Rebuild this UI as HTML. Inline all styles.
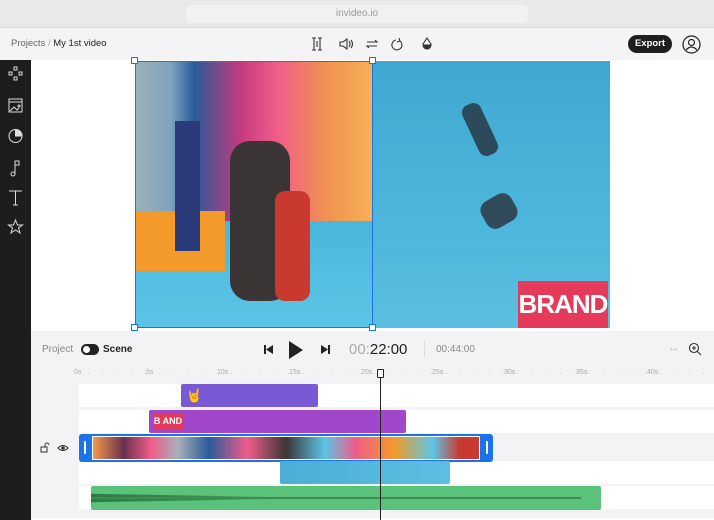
<!DOCTYPE html>
<html><head><style>
*{margin:0;padding:0;box-sizing:border-box}
body{width:714px;height:520px;overflow:hidden;background:#fff;font-family:"Liberation Sans",sans-serif;position:relative}
.abs{position:absolute}
</style></head><body>
<div class="abs" style="left:0;top:0;width:714px;height:28px;background:#e9e8ea;border-bottom:1px solid #dcdcdc"></div>
<div class="abs" style="left:186px;top:5px;width:342px;height:18px;background:#f1f0f2;border-radius:5px;text-align:center;font-size:10px;line-height:18px;color:#999">invideo.io</div>
<div class="abs" style="left:0;top:28px;width:714px;height:32px;background:#f4f3f5"></div>
<div class="abs" style="left:11px;top:38px;font-size:9.5px;color:#666">Projects <span style="color:#aaa">/</span> <span style="color:#222">My 1st video</span></div>
<svg class="abs" style="left:310px;top:36px" width="130" height="16" fill="none" stroke="#333" stroke-width="1.1">
<path d="M4 2v12M10 2v12M2 2h4M2 14h4M8 2h4M8 14h4M7 5v6" />
<path d="M30 6h3l4-3v10l-4-3h-3zM39 5q2 3 0 6M41 4q3 4 0 8"/>
<path d="M57 6h10l-2-2M67 10H57l2 2"/>
<path d="M86 4a5 5 0 1 0 4 1M89 2l1 3-3 1"/>
<path d="M117 2l-4 6a4 4 0 0 0 8 0z"/><path d="M113 9h8a4 4 0 0 1-8 0z" fill="#333"/>
</svg>
<div class="abs" style="left:628px;top:35px;width:44px;height:18px;background:#1f1d20;border-radius:9px;color:#fff;font-size:9.5px;font-weight:bold;text-align:center;line-height:18px">Export</div>
<svg class="abs" style="left:682px;top:35px" width="19" height="19" fill="none" stroke="#222" stroke-width="1.2"><circle cx="9.5" cy="9.5" r="8.5"/><circle cx="9.5" cy="7.5" r="3"/><path d="M4 15q5.5-6 11 0"/></svg>

<div class="abs" style="left:0;top:60px;width:31px;height:460px;background:#1e1c1f"></div>
<svg class="abs" style="left:5px;top:64px" width="22" height="180" fill="none" stroke="#ddd" stroke-width="1">
<rect x="9" y="3" width="3" height="3"/><rect x="4" y="8" width="3" height="3"/><rect x="14" y="8" width="3" height="3"/><rect x="9" y="13" width="3" height="3"/>
<rect x="4" y="35" width="13" height="13"/><path d="M4 38h13M5 47l4-4 3 3 2-2"/><circle cx="14" cy="42" r="1"/>
<circle cx="10.5" cy="72" r="6.5"/><path d="M10.5 65.5a6.5 6.5 0 0 1 6.5 6.5h-6.5z" fill="#ddd"/>
<path d="M10 110v-13h4v4h-4"/><circle cx="8" cy="110" r="2"/>
<path d="M4 127h13M10.5 127v14M8 141h5"/>
<path d="M10.5 156l2 5h5l-4 3 1.5 5-4.5-3-4.5 3 1.5-5-4-3h5z"/>
</svg>

<!-- canvas -->
<div class="abs" style="left:135px;top:61px;width:237px;height:267px;overflow:hidden;background:linear-gradient(90deg,#9cb2b8 0%,#7fa4bf 15%,#2a5b9a 25%,#c73a7e 45%,#ef5d8a 60%,#f09050 80%,#f8b058 100%)">
 <div class="abs" style="left:0;top:160px;width:237px;height:107px;background:linear-gradient(#48b7dc,#5cc5e6)"></div>
 <div class="abs" style="left:0;top:150px;width:90px;height:60px;background:#f39a2a"></div>
 <div class="abs" style="left:40px;top:60px;width:25px;height:130px;background:#2b3a7a"></div>
 <div class="abs" style="left:95px;top:80px;width:60px;height:160px;background:#3c3536;border-radius:20px"></div>
 <div class="abs" style="left:140px;top:130px;width:35px;height:110px;background:#c93930;border-radius:10px"></div>
</div>
<div class="abs" style="left:372px;top:61px;width:238px;height:267px;background:linear-gradient(#3fa8d0,#4db6dc 60%,#5bbfe0)"></div>
<div class="abs" style="left:470px;top:102px;width:20px;height:55px;background:#2b4a5a;transform:rotate(-25deg);border-radius:8px"></div>
<div class="abs" style="left:482px;top:196px;width:34px;height:30px;background:#324b5a;transform:rotate(-30deg);border-radius:10px"></div>
<div class="abs" style="left:518px;top:281px;width:90px;height:47px;background:#e63a5a;color:#fff;font-weight:bold;font-size:26px;line-height:47px;text-align:center;letter-spacing:-1px;overflow:hidden">BRAND</div>
<div class="abs" style="left:135px;top:61px;width:238px;height:267px;border:1.5px solid #1a73e8"></div>
<div class="abs" style="left:131px;top:57px;width:7px;height:7px;border:1.5px solid #1a73e8;background:#fff"></div>
<div class="abs" style="left:369px;top:57px;width:7px;height:7px;border:1.5px solid #1a73e8;background:#fff"></div>
<div class="abs" style="left:131px;top:324px;width:7px;height:7px;border:1.5px solid #1a73e8;background:#fff"></div>
<div class="abs" style="left:369px;top:324px;width:7px;height:7px;border:1.5px solid #1a73e8;background:#fff"></div>

<!-- timeline -->
<div class="abs" style="left:31px;top:331px;width:683px;height:187px;background:#f3f2f4"></div>
<div class="abs" style="left:42px;top:344px;font-size:10px;color:#888">Project</div>
<div class="abs" style="left:81px;top:344px;width:18px;height:11px;border-radius:6px;background:#222"></div>
<div class="abs" style="left:83px;top:346px;width:7px;height:7px;border-radius:4px;background:#fff"></div>
<div class="abs" style="left:103px;top:344px;font-size:10px;color:#222;font-weight:bold">Scene</div>
<svg class="abs" style="left:262px;top:338px" width="72" height="24" fill="#222"><rect x="2" y="7" width="2" height="9"/><path d="M11 7v9l-7-4.5z"/><path d="M27 3v18l14-9z"/><path d="M59 7v9l7-4.5z"/><rect x="66" y="7" width="2" height="9"/></svg>
<div class="abs" style="left:349px;top:341px;font-size:15px;color:#aaa">00:<span style="color:#222">22:00</span></div>
<div class="abs" style="left:424px;top:341px;width:1px;height:16px;background:#ddd"></div>
<div class="abs" style="left:436px;top:344px;font-size:10px;color:#888">00:44:00</div>
<div class="abs" style="left:668px;top:342px;font-size:11px;color:#bbb">↔</div>
<svg class="abs" style="left:688px;top:342px" width="14" height="14" fill="none" stroke="#333" stroke-width="1.1"><circle cx="6" cy="6" r="4.5"/><path d="M9.5 9.5l3.5 3.5M6 4v4M4 6h4"/></svg>
<div class="abs" style="left:88px;top:373px;width:620px;height:1px;background:repeating-linear-gradient(90deg,#ccc 0 1px,transparent 1px 14.3px)"></div>
<div class="abs" style="left:74px;top:369px;font-size:7px;color:#aaa;white-space:nowrap;width:640px;height:9px">
<span class="abs" style="left:0;background:#f3f2f4">0s</span><span class="abs" style="left:72px;background:#f3f2f4">5s</span><span class="abs" style="left:143px;background:#f3f2f4">10s</span><span class="abs" style="left:215px;background:#f3f2f4">15s</span><span class="abs" style="left:287px;background:#f3f2f4">20s</span><span class="abs" style="left:358px;background:#f3f2f4">25s</span><span class="abs" style="left:430px;background:#f3f2f4">30s</span><span class="abs" style="left:502px;background:#f3f2f4">35s</span><span class="abs" style="left:573px;background:#f3f2f4">40s</span></div>
<div class="abs" style="left:79px;top:384px;width:635px;height:23px;background:#fff"></div>
<div class="abs" style="left:79px;top:410px;width:635px;height:23px;background:#fff"></div>
<div class="abs" style="left:79px;top:461px;width:635px;height:23px;background:#fff"></div>
<div class="abs" style="left:79px;top:486px;width:635px;height:23px;background:#fff"></div>
<div class="abs" style="left:181px;top:384px;width:137px;height:23px;background:#7a5ad4;border-radius:2px"></div>
<div class="abs" style="left:186px;top:388px;font-size:13px;color:#e8d83a">🤘</div>
<div class="abs" style="left:149px;top:410px;width:257px;height:23px;background:#a246cc;border-radius:2px"></div>
<div class="abs" style="left:153px;top:414px;width:30px;height:15px;background:#e63a5a;color:#fff;font-size:9px;font-weight:bold;line-height:15px;text-align:center">B AND</div>
<div class="abs" style="left:79px;top:434px;width:414px;height:28px;background:#1a73e8;border-radius:3px"></div>
<div class="abs" style="left:92px;top:436px;width:388px;height:24px;background:linear-gradient(90deg,#f39a4a,#6a3050 8%,#ef5d8a 15%,#a7b0b8 22%,#2a5b9a 30%,#ef5d8a 40%,#3c3536 50%,#5cc5e6 60%,#ef5d8a 68%,#f39a2a 78%,#5cc5e6 88%,#c93930 95%);border:1px solid #fff"></div>
<div class="abs" style="left:84px;top:441px;width:2px;height:13px;background:#fff;border-radius:1px"></div>
<div class="abs" style="left:486px;top:441px;width:2px;height:13px;background:#fff;border-radius:1px"></div>
<svg class="abs" style="left:40px;top:442px" width="30" height="12" fill="none" stroke="#333" stroke-width="1"><rect x="1" y="5" width="6" height="5"/><path d="M5 5V3a2 2 0 0 1 4 0"/><path d="M18 6q5-5 10 0q-5 5-10 0z"/><circle cx="23" cy="6" r="1.3" fill="#333"/></svg>
<div class="abs" style="left:280px;top:461px;width:170px;height:23px;background:linear-gradient(90deg,#4aaed6,#5cbfe2);border-radius:2px"></div>
<div class="abs" style="left:91px;top:486px;width:510px;height:24px;background:#5ac27a;border-radius:2px;overflow:hidden">
<div class="abs" style="left:0;top:5px;width:200px;height:14px;background:linear-gradient(90deg,#2f7a45,#3b8d52 60%,transparent);clip-path:polygon(0 20%,100% 45%,100% 55%,0 80%)"></div>
<div class="abs" style="left:0;top:11px;width:490px;height:2px;background:#3b8d52"></div></div>
<div class="abs" style="left:380px;top:376px;width:1px;height:144px;background:#222"></div>
<div class="abs" style="left:377px;top:369px;width:7px;height:9px;border:1px solid #222;background:#fff;border-radius:1px"></div>
</body></html>
